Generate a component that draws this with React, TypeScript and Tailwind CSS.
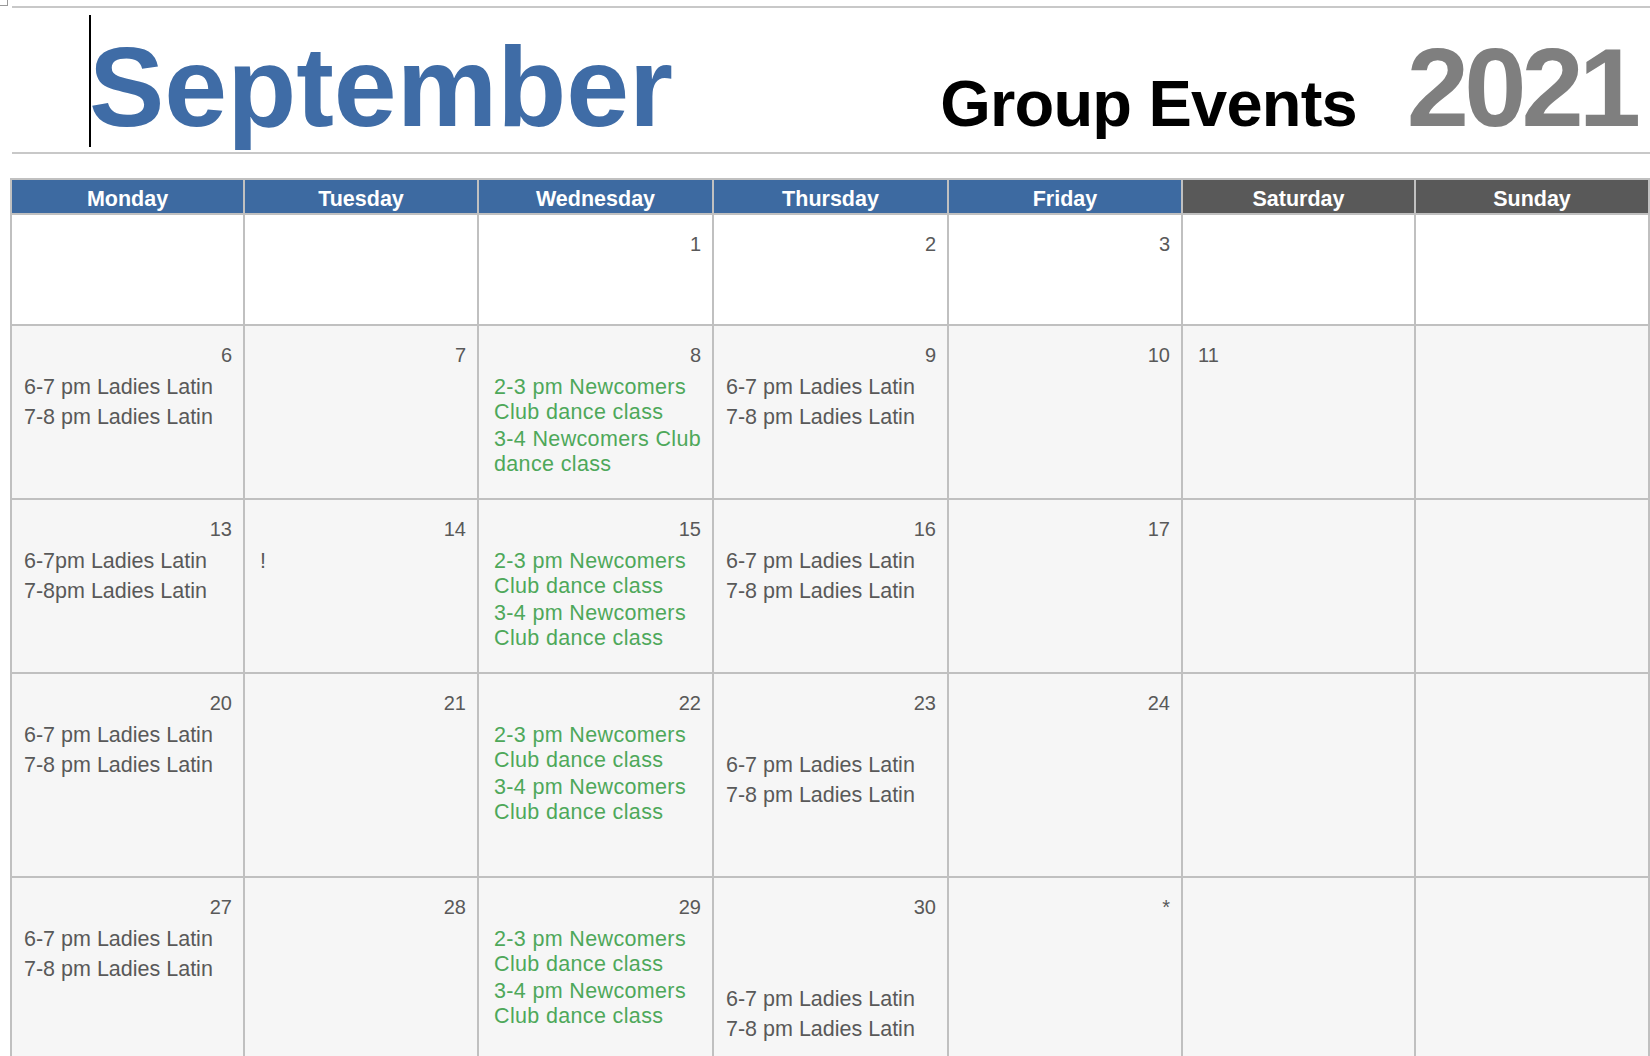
import React from "react";

type Ev = { lines: string[]; green?: boolean } | null;
type Cell = { num?: string; left?: boolean; events?: Ev[] };

const latin: Ev[] = [
  { lines: ["6-7 pm Ladies Latin"] },
  { lines: ["7-8 pm Ladies Latin"] },
];
const latinTight: Ev[] = [
  { lines: ["6-7pm Ladies Latin"] },
  { lines: ["7-8pm Ladies Latin"] },
];
const dance: Ev[] = [
  { lines: ["2-3 pm Newcomers", "Club dance class"], green: true },
  { lines: ["3-4 pm Newcomers", "Club dance class"], green: true },
];

const days = [
  { name: "Monday", weekend: false },
  { name: "Tuesday", weekend: false },
  { name: "Wednesday", weekend: false },
  { name: "Thursday", weekend: false },
  { name: "Friday", weekend: false },
  { name: "Saturday", weekend: true },
  { name: "Sunday", weekend: true },
];

const weeks: { height: string; white?: boolean; cells: Cell[] }[] = [
  {
    height: "h-[111px]",
    white: true,
    cells: [{}, {}, { num: "1" }, { num: "2" }, { num: "3" }, {}, {}],
  },
  {
    height: "h-[174px]",
    cells: [
      { num: "6", events: latin },
      { num: "7" },
      {
        num: "8",
        events: [
          { lines: ["2-3 pm Newcomers", "Club dance class"], green: true },
          { lines: ["3-4 Newcomers Club", "dance class"], green: true },
        ],
      },
      { num: "9", events: latin },
      { num: "10" },
      { num: "11", left: true },
      {},
    ],
  },
  {
    height: "h-[174px]",
    cells: [
      { num: "13", events: latinTight },
      { num: "14", events: [{ lines: ["!"] }] },
      { num: "15", events: dance },
      { num: "16", events: latin },
      { num: "17" },
      {},
      {},
    ],
  },
  {
    height: "h-[204px]",
    cells: [
      { num: "20", events: latin },
      { num: "21" },
      { num: "22", events: dance },
      { num: "23", events: [null, ...latin] },
      { num: "24" },
      {},
      {},
    ],
  },
  {
    height: "h-[190px]",
    cells: [
      { num: "27", events: latin },
      { num: "28" },
      { num: "29", events: dance },
      { num: "30", events: [null, null, ...latin] },
      { num: "*" },
      {},
      {},
    ],
  },
];

const DayCell = ({ cell, white, height }: { cell: Cell; white?: boolean; height: string }) => (
  <div
    className={`${height} border-r-2 border-b-2 border-[#c0c0c0] ${
      white ? "bg-white" : "bg-[#f6f6f6]"
    } pt-[15px] text-[#595959]`}
  >
    <div
      className={`h-[28px] leading-[28px] text-[20px] ${
        cell.left ? "text-left pl-[15px]" : "text-right pr-[11px]"
      }`}
    >
      {cell.num}
    </div>
    <div className="pl-[12px] pt-[1px] text-[21.5px] leading-[25px]">
      {cell.events?.map((ev, i) =>
        ev === null ? (
          <div key={i} className="h-[25px] mt-[5px]" />
        ) : (
          <div
            key={i}
            className={
              ev.green
                ? `text-[#4ea85a] pl-[3px] tracking-[0.35px] ${i === 0 ? "mt-[5px]" : "mt-[2px]"}`
                : `mt-[5px] ${ev.lines[0] === "!" ? "pl-[3px]" : ""}`
            }
          >
            {ev.lines.map((l) => (
              <div key={l} className="whitespace-nowrap">
                {l}
              </div>
            ))}
          </div>
        )
      )}
    </div>
  </div>
);

const App = () => {
  return (
    <div className="relative w-[1650px] h-[1056px] overflow-hidden bg-white font-['Liberation_Sans',Arial,sans-serif]">
      <div className="absolute top-0 left-0 w-[8px] h-[6px] border-r border-b border-[#9a9a9a]" />

      <div className="pt-[6px] pl-[12px]">
        <div className="border-t-2 border-[#c8c8c8]" />
      </div>

      {/* title */}
      <header className="relative h-[144px] flex items-baseline pt-[23px] pl-[89px] pr-[14px]">
        <div className="absolute left-[89px] top-[7px] w-[2px] h-[132px] bg-black" />
        <h1 className="text-[113px] leading-none font-bold text-[#3f6ca6]">September</h1>
        <div className="flex-1" />
        <h2 className="text-[65px] leading-none font-bold text-black tracking-[-0.8px]">
          Group Events
        </h2>
        <span className="ml-[50px] text-[112px] leading-none font-bold text-[#7f7f7f] tracking-[-5px]">
          2021
        </span>
      </header>

      <div className="pl-[12px]">
        <div className="border-t-2 border-[#c8c8c8]" />
      </div>

      {/* calendar */}
      <section className="mt-[24px] ml-[10px] border-t-2 border-l-2 border-[#c0c0c0] grid grid-cols-[233px_234px_235px_235px_234px_233px_234px]">
        {days.map((d) => (
          <div
            key={d.name}
            className={`h-[35px] border-r-2 border-b-2 border-[#c0c0c0] flex items-center justify-center pt-[6px] text-white font-bold text-[21.5px] leading-none ${
              d.weekend ? "bg-[#595959]" : "bg-[#3d6aa1]"
            }`}
          >
            {d.name}
          </div>
        ))}
        {weeks.map((w, wi) =>
          w.cells.map((c, ci) => (
            <DayCell key={`${wi}-${ci}`} cell={c} white={w.white} height={w.height} />
          ))
        )}
      </section>
    </div>
  );
};

export default App;
